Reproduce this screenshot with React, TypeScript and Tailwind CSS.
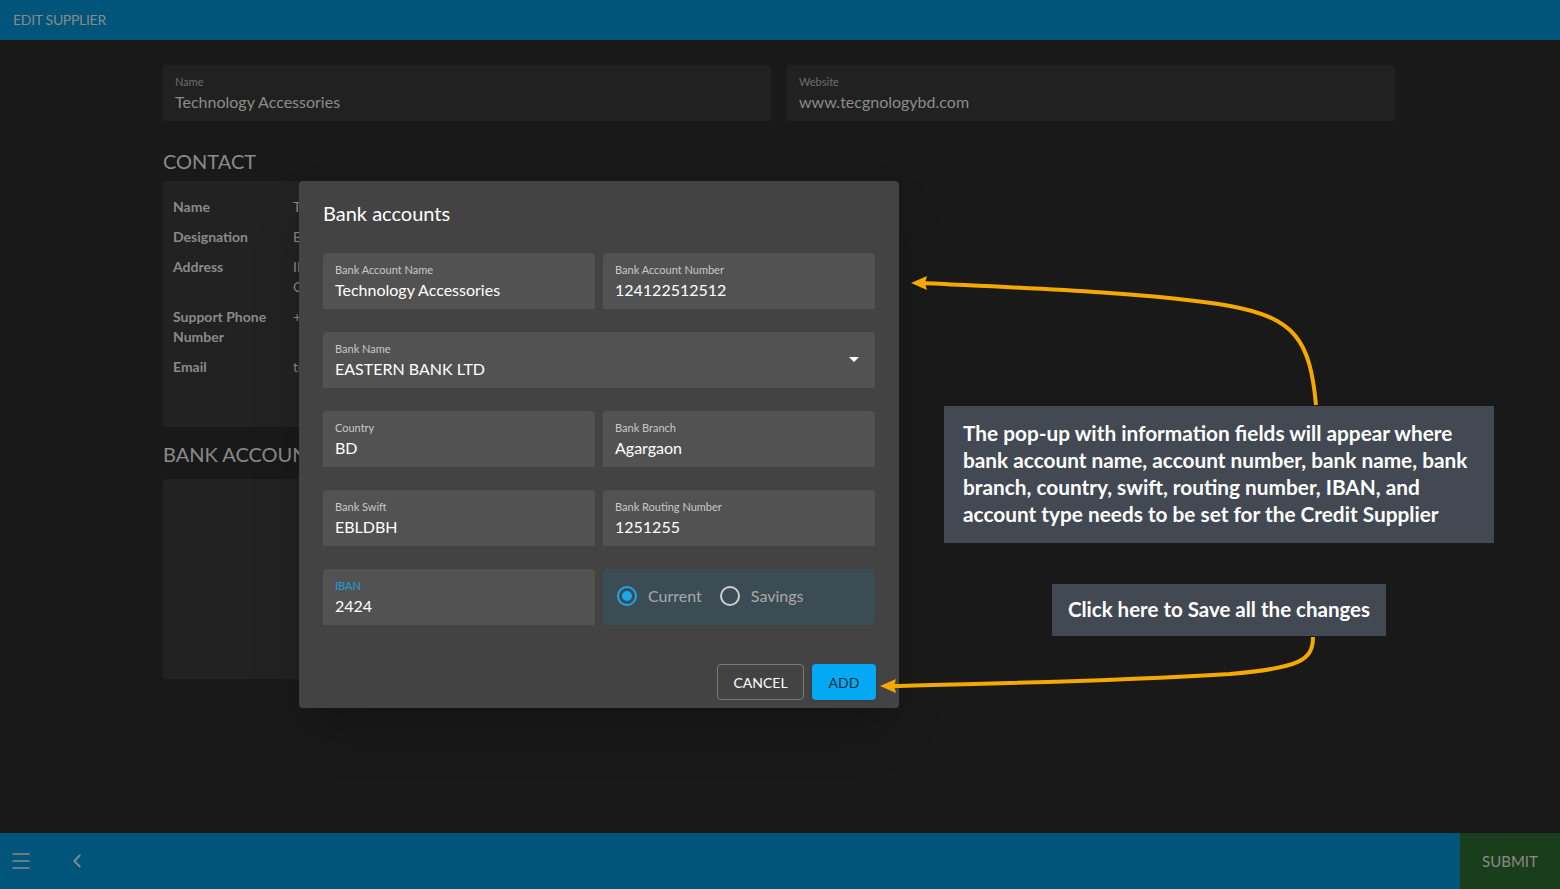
import { ChevronLeft, Menu } from 'lucide-react'

const CONTACT_ROWS: { label: string[]; value: string[] }[] = [
  { label: ['Name'], value: ['Technology Accessories Ltd'] },
  { label: ['Designation'], value: ['Business Manager'] },
  { label: ['Address'], value: ['IDB Bhaban, Agargaon', 'Chattogram Road, Dhaka'] },
  { label: ['Support Phone', 'Number'], value: ['+8801712345678'] },
  { label: ['Email'], value: ['tech@tecgnologybd.com'] },
]

function PageField({ label, value }: { label: string; value: string }) {
  return (
    <div className="h-14 rounded-t bg-[#212121] px-3 pt-[10px]">
      <div className="text-[11px] leading-[13px] text-[#6f6f6f]">{label}</div>
      <div className="mt-[4px] text-[16px] leading-[20px] text-[#8c8c8c]">{value}</div>
    </div>
  )
}

function DialogField({
  label,
  value,
  active,
  select,
}: {
  label: string
  value: string
  active?: boolean
  select?: boolean
}) {
  return (
    <div className="relative h-14 rounded-t bg-[#525252] px-3 pt-[10px]">
      <div className={`text-[11px] leading-[13px] ${active ? 'text-[#1a9fe0]' : 'text-[#c8c8c8]'}`}>
        {label}
      </div>
      <div className="mt-[4px] text-[16px] leading-[20px] text-white">{value}</div>
      {select && (
        <svg className="absolute right-[16px] top-[25px]" width="10" height="5" viewBox="0 0 10 5">
          <path d="M0 0 L10 0 L5 5 Z" fill="#ffffff" />
        </svg>
      )}
    </div>
  )
}

export default function App() {
  return (
    <div className="relative flex h-screen flex-col overflow-hidden bg-[#191919] font-['Lato',sans-serif]">
      {/* Top bar */}
      <div className="flex h-10 shrink-0 items-center bg-[#02557a] px-[13px] pb-px">
        <span className="text-[14px] tracking-[-0.3px] text-[#8a8a8a]">EDIT SUPPLIER</span>
      </div>

      <div className="flex-1">
        <div className="ml-[163px] w-[1232px] pt-[25px]">
          <div className="grid grid-cols-2 gap-4">
            <PageField label="Name" value="Technology Accessories" />
            <PageField label="Website" value="www.tecgnologybd.com" />
          </div>

          <h2 className="mt-[28px] text-[20px] leading-[24px] text-[#8a8a8a]">CONTACT</h2>
          <div className="mt-[8px] h-[246px] w-[608px] rounded bg-[#222222] px-[10px] pt-[16px]">
            <div className="flex flex-col gap-[10px]">
              {CONTACT_ROWS.map((r) => (
                <div key={r.label[0]} className="flex text-[14px] leading-[20px]">
                  <div className="w-[120px] font-bold text-[#8a8a8a]">
                    {r.label.map((l) => (
                      <div key={l}>{l}</div>
                    ))}
                  </div>
                  <div className="text-[#8a8a8a]">
                    {r.value.map((v) => (
                      <div key={v}>{v}</div>
                    ))}
                  </div>
                </div>
              ))}
            </div>
          </div>

          <h2 className="mt-[15px] text-[20px] leading-[24px] text-[#8a8a8a]">BANK ACCOUNTS</h2>
          <div className="mt-[13px] h-[200px] w-[608px] rounded bg-[#222222]" />
        </div>
      </div>

      {/* Bottom bar */}
      <div className="flex h-14 shrink-0 items-center bg-[#01547a]">
        <Menu className="ml-[9px] text-[#8a8a8a]" size={24} strokeWidth={1.5} />
        <ChevronLeft className="ml-[33px] text-[#8a8a8a]" size={22} strokeWidth={2} />
        <div className="ml-auto flex h-full w-[100px] items-center justify-center bg-[#1a3e1b]">
          <span className="text-[15px] text-[#8a8a8a]">SUBMIT</span>
        </div>
      </div>

      {/* Dialog */}
      <div className="absolute left-[299px] top-[181px] w-[600px] rounded bg-[#434343] px-6 pb-2 pt-[20px] shadow-2xl">
        <h3 className="text-[20px] leading-[24px] text-white">Bank accounts</h3>
        <div className="mt-[28px] flex flex-col gap-[23px]">
          <div className="grid grid-cols-2 gap-2">
            <DialogField label="Bank Account Name" value="Technology Accessories" />
            <DialogField label="Bank Account Number" value="124122512512" />
          </div>
          <DialogField label="Bank Name" value="EASTERN BANK LTD" select />
          <div className="grid grid-cols-2 gap-2">
            <DialogField label="Country" value="BD" />
            <DialogField label="Bank Branch" value="Agargaon" />
          </div>
          <div className="grid grid-cols-2 gap-2">
            <DialogField label="Bank Swift" value="EBLDBH" />
            <DialogField label="Bank Routing Number" value="1251255" />
          </div>
          <div className="grid grid-cols-2 gap-2">
            <DialogField label="IBAN" value="2424" active />
            <div className="flex h-14 items-center rounded bg-[#3b4c54] px-[14px] pb-[3px]">
              <span className="flex h-5 w-5 items-center justify-center rounded-full border-2 border-[#1aa7ec]">
                <span className="h-[10px] w-[10px] rounded-full bg-[#1aa7ec]" />
              </span>
              <span className="ml-[11px] text-[16px] text-[#a9a9a9]">Current</span>
              <span className="ml-[18px] h-5 w-5 rounded-full border-2 border-[#cfcfcf]" />
              <span className="ml-[11px] text-[16px] text-[#a9a9a9]">Savings</span>
            </div>
          </div>
        </div>
        <div className="mt-[39px] flex justify-end gap-2">
          <button className="h-9 w-[87px] rounded border border-[#7a7a7a] text-[14px] text-white">
            CANCEL
          </button>
          <button className="mr-[-1px] h-9 w-[64px] rounded bg-[#03a9f4] text-[14px] text-[#0d2a3a] shadow">
            ADD
          </button>
        </div>
      </div>

      {/* Annotations */}
      <div className="absolute left-[944px] top-[406px] w-[550px] bg-[#424953] px-[19px] pb-[16px] pt-[13px] text-[20.8px] font-bold leading-[27px] text-white">
        The pop-up with information fields will appear where bank account name, account number, bank
        name, bank branch, country, swift, routing number, IBAN, and account type needs to be set for the
        Credit Supplier
      </div>
      <div className="absolute left-[1052px] top-[584px] flex h-[52px] w-[334px] items-center justify-center bg-[#424953] pb-[2px] text-[20.5px] font-bold text-white">
        Click here to Save all the changes
      </div>

      <svg className="pointer-events-none absolute inset-0" width="1560" height="889">
        <path
          d="M1316 405 C1310 340 1295 318 1230 306 C1150 292 1000 287 922 283"
          fill="none"
          stroke="#f5a800"
          strokeWidth="4"
        />
        <path d="M911 283 L927 276 L925 283 L927 290 Z" fill="#f5a800" />
        <path
          d="M1313 637 C1313 660 1300 668 1230 674 C1100 682 1000 683 893 686"
          fill="none"
          stroke="#f5a800"
          strokeWidth="4"
        />
        <path d="M880 686 L896 679 L894 686 L896 693 Z" fill="#f5a800" />
      </svg>
    </div>
  )
}
